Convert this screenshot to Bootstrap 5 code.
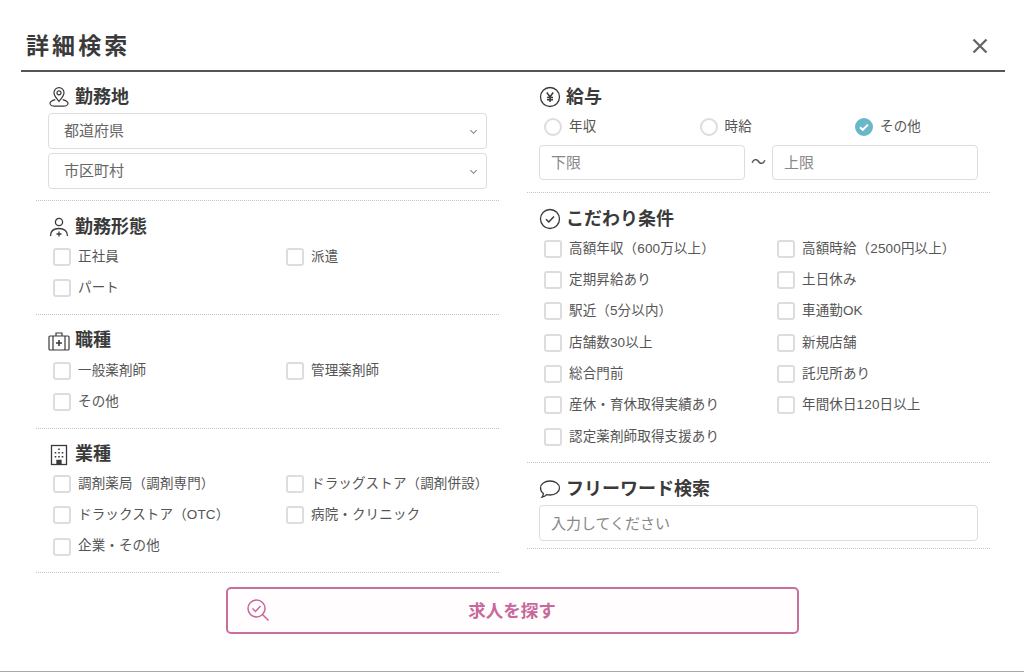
<!DOCTYPE html>
<html lang="ja">
<head>
<meta charset="UTF-8">
<meta name="viewport" content="width=device-width, initial-scale=1.0">
<title>詳細検索</title>
<link href="https://cdn.jsdelivr.net/npm/bootstrap@5.3.0/dist/css/bootstrap.min.css" rel="stylesheet">
<style>
html, body { height: 100%; }
body {
    font-family: "Liberation Sans", "Noto Sans CJK JP", sans-serif;
    color: #555;
    background: #fff;
    overflow: hidden;
}
.search-panel { height: 672px; border-bottom: 1px solid #aaa; padding: 0 19px 0 21px; }
.search-head { height: 72px; border-bottom: 2px solid #555; padding: 30px 17px 0 5px; }
.search-title { font-size: 23px; line-height: 32px; font-weight: 700; color: #3a3a3a; letter-spacing: 3.1px; margin: 0; }
.close-x { width: 16px; height: 16px; color: #666; margin-top: 8px; }
.search-cols { padding: 0 15px; gap: 28px; }
.search-col { width: 463px; }
.block { padding: 14px 12px 10px; border-bottom: 1px dotted #c4c4c4; }
.block-first { padding-top: 13px; padding-bottom: 12px; }
.block-place { padding-bottom: 11px; }
.block-free { padding-bottom: 7px; }
.block-head { display: flex; align-items: center; height: 24px; margin-bottom: 2.5px; font-size: 18px; font-weight: 700; color: #3a3a3a; }
.block-head svg { width: 22px; height: 22px; margin-right: 5px; color: #3a3a3a; flex: none; }
.head-select { margin-bottom: 4px; }
.head-tight { margin-bottom: 1.8px; }
.head-free { margin-bottom: 4px; }
.select-box {
    height: 36px;
    padding: 0 24px 0 15px;
    font-size: 15px;
    line-height: 34px;
    color: #666;
    border: 1px solid #ddd;
    border-radius: 4px;
    background-image: url("data:image/svg+xml,%3csvg xmlns='http://www.w3.org/2000/svg' viewBox='0 0 10 10'%3e%3cpath fill='none' stroke='%23888' stroke-width='1.200' d='M1.500 3.500L5 7l3.500-3.500'/%3e%3c/svg%3e");
    background-size: 9px 9px;
    background-position: right 8px center;
}
.select-gap { margin-bottom: 4px; }
.text-box {
    height: 35px;
    padding: 0 11px;
    font-size: 15px;
    border: 1px solid #ddd;
    border-radius: 4px;
}
.text-box::placeholder { color: #888; }
.text-free { height: 36px; }
.wave { width: 27px; font-size: 15px; text-align: center; color: #555; flex: none; }
.tick-row { height: 31.2px; display: flex; align-items: center; }
.rows-wide .tick-row { height: 31.35px; }
.row > .tick-row { width: 206px; }
.row > .check-left { width: 233px; }
.tick-row .form-check-input {
    width: 18px;
    height: 18px;
    margin: 0 7px 0 5px;
    flex: none;
    border: 2px solid #ddd;
    border-radius: 3px;
}
.tick-row label { font-size: 13.5px; letter-spacing: .15px; color: #555; white-space: nowrap; }
.tick-row .form-check-input[type=radio] { border-radius: 50%; }
.tick-row .form-check-input[type=radio]:checked {
    background-color: #69b7c9;
    border-color: #69b7c9;
    background-size: 12px 12px;
    background-image: url("data:image/svg+xml,%3csvg xmlns='http://www.w3.org/2000/svg' viewBox='0 0 12 12'%3e%3cpath fill='none' stroke='%23fff' stroke-width='2' d='M2 6.200l2.800 2.600L10 3.600'/%3e%3c/svg%3e");
}
.pay-row { margin-bottom: 2.5px; }
.pay-col { width: 155.5px; flex: none; }
.find-wrap { padding: 14px 2px 0 0; }
.find-btn {
    position: relative;
    width: 573px;
    height: 47px;
    padding-top: 7px;
    font-size: 17.5px;
    line-height: 28px;
    font-weight: 700;
    color: #c9689a;
    background: #fffdfe;
    border: 2px solid #c9709a;
    border-radius: 5px;
}
.find-btn:hover { color: #c9689a; background: #fdf3f8; border-color: #c9709a; }
.find-btn svg { position: absolute; left: 18px; top: 9px; width: 24px; height: 24px; }
</style>
</head>
<body>
<div class="search-panel">
    <div class="search-head d-flex justify-content-between align-items-start">
        <h1 class="search-title">詳細検索</h1>
        <svg class="close-x" viewBox="0 0 16 16" fill="none" stroke="currentColor" stroke-width="2.300"><path d="M1.500 1.500l13 13M14.500 1.500l-13 13"/></svg>
    </div>

    <div class="search-cols d-flex">
        <div class="search-col">
            <div class="block block-first block-place">
                <div class="block-head head-select">
                    <svg viewBox="0 0 22 22" fill="none" stroke="currentColor" stroke-width="1.200"><path d="M11 15.500c-2.600-3.400-5-5.700-5-8.800a5 5 0 0 1 10 0c0 3.100-2.400 5.400-5 8.800z"/><circle cx="11" cy="6.800" r="2"/><path d="M7.300 13.700c-2.200.6-5.300 2.100-5.300 3.800 0 1.600 2.400 2.700 4.400 2.700h9.200c2 0 4.400-1.100 4.400-2.700 0-1.700-3.100-3.200-5.300-3.800"/></svg>
                    勤務地
                </div>
                <select class="form-select select-box select-gap" aria-label="都道府県"><option>都道府県</option></select>
                <select class="form-select select-box" aria-label="市区町村"><option>市区町村</option></select>
            </div>

            <div class="block">
                <div class="block-head">
                    <svg viewBox="0 0 22 22" fill="none" stroke="currentColor" stroke-width="1.300"><circle cx="11" cy="6" r="3.600"/><path d="M2.500 20c0-5 3.600-7.500 8.500-7.500s8.500 2.500 8.500 7.500"/><path d="M11 15.500v5M8.500 18h5"/></svg>
                    勤務形態
                </div>
                <div class="row g-0">
                    <div class="col-auto check-left tick-row"><input class="form-check-input" type="checkbox" id="w1"><label for="w1">正社員</label></div>
                    <div class="col-auto tick-row"><input class="form-check-input" type="checkbox" id="w2"><label for="w2">派遣</label></div>
                    <div class="col-auto check-left tick-row"><input class="form-check-input" type="checkbox" id="w3"><label for="w3">パート</label></div>
                </div>
            </div>

            <div class="block">
                <div class="block-head">
                    <svg viewBox="0 0 22 22" fill="none" stroke="currentColor" stroke-width="1.200"><rect x="1" y="6" width="20" height="14" rx="1"/><path d="M5 6v14M17 6v14M8 6V3h6v3"/><path d="M11 10v6M8 13h6" stroke-width="1.600"/></svg>
                    職種
                </div>
                <div class="row g-0">
                    <div class="col-auto check-left tick-row"><input class="form-check-input" type="checkbox" id="j1"><label for="j1">一般薬剤師</label></div>
                    <div class="col-auto tick-row"><input class="form-check-input" type="checkbox" id="j2"><label for="j2">管理薬剤師</label></div>
                    <div class="col-auto check-left tick-row"><input class="form-check-input" type="checkbox" id="j3"><label for="j3">その他</label></div>
                </div>
            </div>

            <div class="block">
                <div class="block-head head-tight">
                    <svg viewBox="0 0 22 22" fill="none" stroke="currentColor" stroke-width="1.300"><rect x="3.500" y="1.500" width="15" height="19"/><path d="M9 20.500v-4h4v4" fill="currentColor"/><path d="M11 4.500v1.500M7.500 8v1.500M11 8v1.500M14.500 8v1.500M7.500 12v1.500M11 12v1.500M14.500 12v1.500" stroke-width="1.600"/></svg>
                    業種
                </div>
                <div class="row g-0">
                    <div class="col-auto check-left tick-row"><input class="form-check-input" type="checkbox" id="t1"><label for="t1">調剤薬局（調剤専門）</label></div>
                    <div class="col-auto tick-row"><input class="form-check-input" type="checkbox" id="t2"><label for="t2">ドラッグストア（調剤併設）</label></div>
                    <div class="col-auto check-left tick-row"><input class="form-check-input" type="checkbox" id="t3"><label for="t3">ドラックストア（OTC）</label></div>
                    <div class="col-auto tick-row"><input class="form-check-input" type="checkbox" id="t4"><label for="t4">病院・クリニック</label></div>
                    <div class="col-auto check-left tick-row"><input class="form-check-input" type="checkbox" id="t5"><label for="t5">企業・その他</label></div>
                </div>
            </div>
        </div>

        <div class="search-col">
            <div class="block block-first">
                <div class="block-head">
                    <svg viewBox="0 0 22 22" fill="none" stroke="currentColor" stroke-width="1.300"><circle cx="11" cy="11" r="9.500"/><path d="M7.800 6.500L11 11l3.200-4.500M11 11v5M8 11.500h6M8 13.800h6" stroke-width="1.500"/></svg>
                    給与
                </div>
                <div class="d-flex pay-row">
                    <div class="pay-col tick-row"><input class="form-check-input" type="radio" name="pay" id="p1"><label for="p1">年収</label></div>
                    <div class="pay-col tick-row"><input class="form-check-input" type="radio" name="pay" id="p2"><label for="p2">時給</label></div>
                    <div class="pay-col tick-row"><input class="form-check-input" type="radio" name="pay" id="p3" checked><label for="p3">その他</label></div>
                </div>
                <div class="d-flex align-items-center">
                    <input type="text" class="form-control text-box" placeholder="下限">
                    <span class="wave">〜</span>
                    <input type="text" class="form-control text-box" placeholder="上限">
                </div>
            </div>

            <div class="block">
                <div class="block-head head-tight">
                    <svg viewBox="0 0 22 22" fill="none" stroke="currentColor" stroke-width="1.300"><circle cx="11" cy="11" r="9.500"/><path d="M7 11.200l2.800 2.800L15 8.500" stroke-width="1.500"/></svg>
                    こだわり条件
                </div>
                <div class="row g-0 rows-wide">
                    <div class="col-auto check-left tick-row"><input class="form-check-input" type="checkbox" id="c1"><label for="c1">高額年収（600万以上）</label></div>
                    <div class="col-auto tick-row"><input class="form-check-input" type="checkbox" id="c2"><label for="c2">高額時給（2500円以上）</label></div>
                    <div class="col-auto check-left tick-row"><input class="form-check-input" type="checkbox" id="c3"><label for="c3">定期昇給あり</label></div>
                    <div class="col-auto tick-row"><input class="form-check-input" type="checkbox" id="c4"><label for="c4">土日休み</label></div>
                    <div class="col-auto check-left tick-row"><input class="form-check-input" type="checkbox" id="c5"><label for="c5">駅近（5分以内）</label></div>
                    <div class="col-auto tick-row"><input class="form-check-input" type="checkbox" id="c6"><label for="c6">車通勤OK</label></div>
                    <div class="col-auto check-left tick-row"><input class="form-check-input" type="checkbox" id="c7"><label for="c7">店舗数30以上</label></div>
                    <div class="col-auto tick-row"><input class="form-check-input" type="checkbox" id="c8"><label for="c8">新規店舗</label></div>
                    <div class="col-auto check-left tick-row"><input class="form-check-input" type="checkbox" id="c9"><label for="c9">総合門前</label></div>
                    <div class="col-auto tick-row"><input class="form-check-input" type="checkbox" id="c10"><label for="c10">託児所あり</label></div>
                    <div class="col-auto check-left tick-row"><input class="form-check-input" type="checkbox" id="c11"><label for="c11">産休・育休取得実績あり</label></div>
                    <div class="col-auto tick-row"><input class="form-check-input" type="checkbox" id="c12"><label for="c12">年間休日120日以上</label></div>
                    <div class="col-auto check-left tick-row"><input class="form-check-input" type="checkbox" id="c13"><label for="c13">認定薬剤師取得支援あり</label></div>
                </div>
            </div>

            <div class="block block-free">
                <div class="block-head head-free">
                    <svg viewBox="0 0 22 22" fill="none" stroke="currentColor" stroke-width="1.300"><path d="M11 3c5.300 0 9.500 3 9.500 7s-4.200 7-9.500 7c-1.200 0-2.300-.2-3.400-.4-1 1.200-2.600 2.200-4.600 2.600.8-1 1.300-2.300 1.400-3.700C2.700 14.300 1.500 12.300 1.500 10c0-4 4.200-7 9.500-7z"/></svg>
                    フリーワード検索
                </div>
                <input type="text" class="form-control text-box text-free" placeholder="入力してください">
            </div>
        </div>
    </div>

    <div class="find-wrap text-center">
        <button type="button" class="btn find-btn">
            <svg viewBox="0 0 24 24" fill="none" stroke="currentColor" stroke-width="1.500"><circle cx="10.500" cy="10.500" r="8.500"/><path d="M6.500 10.500l3 3 5-5.500M16.500 16.500l6 6"/></svg>
            求人を探す
        </button>
    </div>
</div>
<script src="https://cdn.jsdelivr.net/npm/bootstrap@5.3.0/dist/js/bootstrap.bundle.min.js"></script>
</body>
</html>
